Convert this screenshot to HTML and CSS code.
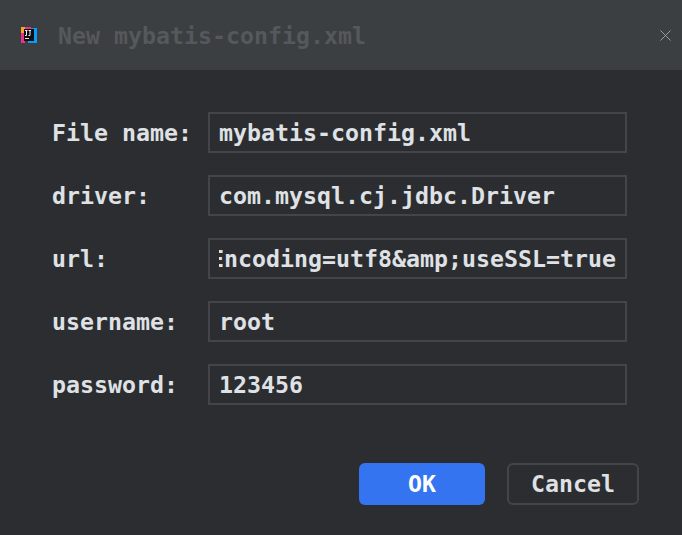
FILE: index.html
```html
<!DOCTYPE html>
<html lang="en">
<head>
    <meta charset="UTF-8">
    <title>New mybatis-config.xml</title>
    <link rel="stylesheet" href="styles.css">
</head>
<body>
    <div class="dialog">
        <div class="title-bar">
            <svg class="app-icon" width="16" height="16" viewBox="0 0 16 16">
                <rect x="7" y="1" width="9" height="15" fill="#0a9cf5"/>
                <rect x="0" y="5" width="4" height="11" fill="#ec2f8c"/>
                <rect x="3" y="0" width="7" height="3" fill="#ec2f8c"/>
                <rect x="0" y="0" width="4" height="6" fill="#f5a623"/>
                <rect x="3" y="2" width="10" height="12" fill="#0d0d12"/>
                <path d="M4 3.5 H6.5 M5.5 3.5 V8.5 H4 M7.5 3.5 H10 M9 3.5 V8.5 H7.5" stroke="#f2f2f2" stroke-width="1" fill="none"/>
                <rect x="4" y="11" width="4" height="1" fill="#e8e8e8"/>
            </svg>
            <div class="title">New mybatis-config.xml</div>
            <svg class="close" width="11" height="11" viewBox="0 0 11 11">
                <path d="M0.5 0.5 L10.5 10.5 M10.5 0.5 L0.5 10.5" stroke="#9a9da0" stroke-width="1" fill="none"/>
            </svg>
        </div>
        <div class="form">
            <label class="label">File name:</label>
            <div class="field"><span>mybatis-config.xml</span></div>
            <label class="label">driver:</label>
            <div class="field"><span>com.mysql.cj.jdbc.Driver</span></div>
            <label class="label">url:</label>
            <div class="field"><div class="clip"><span>jdbc:mysql://localhost:3306/mybatis?useUnicode=true&amp;amp;characterEncoding=utf8&amp;amp;useSSL=true</span></div></div>
            <label class="label">username:</label>
            <div class="field"><span>root</span></div>
            <label class="label">password:</label>
            <div class="field"><span>123456</span></div>
        </div>
        <div class="buttons">
            <div class="btn primary">OK</div>
            <div class="btn">Cancel</div>
        </div>
    </div>
</body>
</html>
```

FILE: styles.css
```css
*{
    margin:0;
    padding:0;
    box-sizing:border-box;
}
body{
    background:#2b2d30;
    font-family:"DejaVu Sans Mono","Liberation Mono",monospace;
    font-weight:bold;
    font-size:23.25px;
    color:#dfe1e5;
}
.dialog{
    width:682px;
    height:535px;
    overflow:hidden;
}
.title-bar{
    height:70px;
    background:#3c3f41;
    display:flex;
    align-items:center;
    padding:0 10px 0 21px;
}
.app-icon{
    flex:none;
}
.title{
    margin-left:21px;
    color:#55585c;
    flex:1;
}
.close{
    margin-right:1px;
}
.form{
    display:grid;
    grid-template-columns:156px 419px;
    row-gap:22px;
    padding:42px 0 0 52px;
    align-items:center;
}
.label{
    line-height:41px;
}
.field{
    height:41px;
    border:2px solid #43454a;
    padding:0 9px 1px;
    display:flex;
    align-items:center;
    white-space:nowrap;
}
.clip{
    flex:1;
    min-width:0;
    overflow:hidden;
    display:flex;
    justify-content:flex-end;
}
.clip span{
    flex:none;
}
.buttons{
    display:flex;
    justify-content:flex-end;
    gap:22px;
    padding:58px 43px 0 0;
}
.btn{
    width:132px;
    height:42px;
    border:2px solid #43454a;
    border-radius:6px;
    padding-bottom:2px;
    display:flex;
    align-items:center;
    justify-content:center;
}
.primary{
    width:126px;
    background:#3574f0;
    border:none;
    color:#ffffff;
}
```
